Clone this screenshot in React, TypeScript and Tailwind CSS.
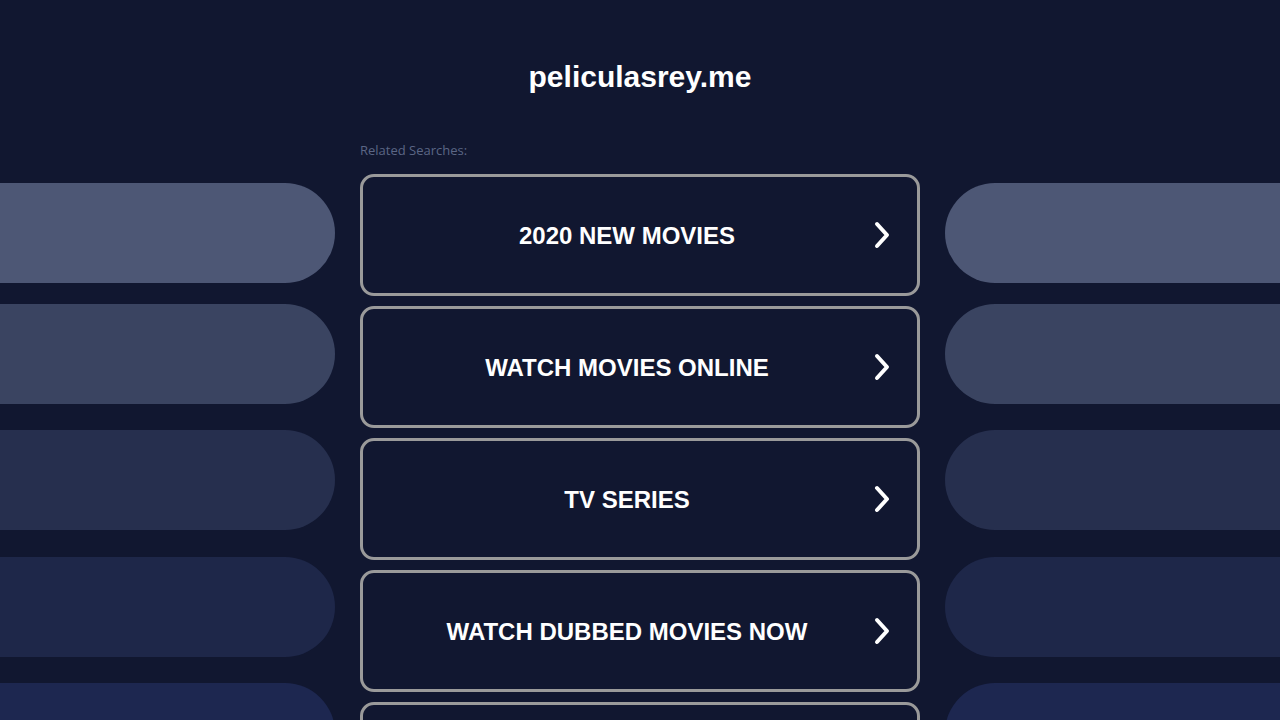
import React from "react";

// the fifth box runs past the bottom of the page; its label is not visible
const searches = [
  "2020 NEW MOVIES",
  "WATCH MOVIES ONLINE",
  "TV SERIES",
  "WATCH DUBBED MOVIES NOW",
  "",
];

const Chevron = () => (
  <svg width="18" height="28" viewBox="0 0 18 28" fill="none">
    <path
      d="M4 3 L14 14 L4 25"
      stroke="white"
      strokeWidth="4"
      strokeLinecap="round"
      strokeLinejoin="round"
    />
  </svg>
);

const App = () => {
  return (
    <div
      className="flex h-[720px] w-full overflow-hidden bg-[#111730] items-start"
      style={{ fontFamily: "Arial, 'Liberation Sans', sans-serif" }}
    >
      {/* left decoration */}
      <div className="flex w-[335px] shrink-0 flex-col pt-[183px]">
        <div className="h-[100px] rounded-r-[50px] bg-[#4d5775]" />
        <div className="mt-[21px] h-[100px] rounded-r-[50px] bg-[#3a4461]" />
        <div className="mt-[26px] h-[100px] rounded-r-[50px] bg-[#262f4e]" />
        <div className="mt-[27px] h-[100px] rounded-r-[50px] bg-[#1e2749]" />
        <div className="mt-[26px] h-[100px] rounded-r-[50px] bg-[#1d2750]" />
      </div>

      {/* main */}
      <div className="mx-[25px] flex w-[560px] shrink-0 flex-col">
        <h1 className="pt-[59px] text-center text-[30px] font-bold leading-[36px] text-white">
          peliculasrey.me
        </h1>
        <p
          className="mt-[47px] text-[13px] leading-[16px] text-[#5b6685]"
          style={{ fontFamily: "'Open Sans', sans-serif" }}
        >
          Related Searches:
        </p>
        <div className="mt-[16px] flex flex-col gap-[10px]">
          {searches.map((s, i) => (
            <a
              key={i}
              href="#"
              className="flex h-[122px] items-center rounded-[14px] border-[3px] border-[#9a9a9a] bg-[#111730] pl-[18px] pr-[26px]"
            >
              <span className="flex-1 pt-[2px] text-center text-[24px] font-bold text-white">
                {s}
              </span>
              {s && <Chevron />}
            </a>
          ))}
        </div>
      </div>

      {/* right decoration */}
      <div className="flex flex-1 flex-col pt-[183px]">
        <div className="h-[100px] rounded-l-[50px] bg-[#4d5775]" />
        <div className="mt-[21px] h-[100px] rounded-l-[50px] bg-[#3a4461]" />
        <div className="mt-[26px] h-[100px] rounded-l-[50px] bg-[#262f4e]" />
        <div className="mt-[27px] h-[100px] rounded-l-[50px] bg-[#1e2749]" />
        <div className="mt-[26px] h-[100px] rounded-l-[50px] bg-[#1d2750]" />
      </div>
    </div>
  );
};

export default App;
